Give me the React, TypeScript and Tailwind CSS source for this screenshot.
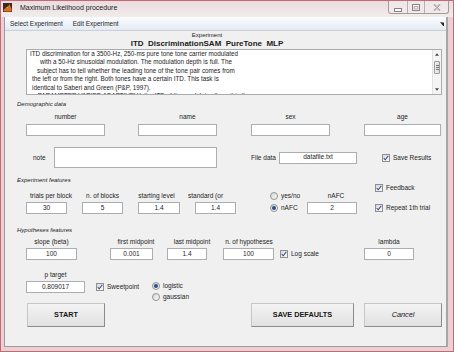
import React from "react";

type Kids = { children?: React.ReactNode; className?: string };

function Box({ children, className = "" }: Kids) {
  return (
    <div
      className={`h-[12px] flex items-center justify-center bg-white border border-[#abadb1] text-[6.5px] leading-none text-[#1c1c1c] ${className}`}
    >
      {children}
    </div>
  );
}

function Label({ children, className = "" }: Kids) {
  return (
    <div className={`h-[8px] text-[6.5px] leading-[8px] text-[#1c1c1c] whitespace-nowrap ${className}`}>
      {children}
    </div>
  );
}

function Section({ children, className = "" }: Kids) {
  return (
    <div className={`ml-[12px] h-[8px] text-[6px] leading-[8px] italic text-[#1c1c1c] ${className}`}>
      {children}
    </div>
  );
}

function CheckBox({ label, className = "" }: { label: string; className?: string }) {
  return (
    <div className={`flex items-center gap-[3px] ${className}`}>
      <div className="w-[8px] h-[8px] border border-[#8e8f8f] bg-linear-to-br from-[#d7d9de] to-[#fafafa] flex items-center justify-center">
        <svg viewBox="0 0 8 8" className="w-[6px] h-[6px]">
          <path d="M1 4.2 L3 6.4 L7 1.2" fill="none" stroke="#3b4f88" strokeWidth="1.4" />
        </svg>
      </div>
      <span className="text-[6.5px] leading-[8px] text-[#1c1c1c] whitespace-nowrap">{label}</span>
    </div>
  );
}

function Radio({ label, on = false, className = "" }: { label: string; on?: boolean; className?: string }) {
  return (
    <div className={`flex items-center gap-[3px] ${className}`}>
      <div className="w-[8px] h-[8px] rounded-full border border-[#939393] bg-linear-to-br from-[#d5d5d5] to-[#fbfbfb] flex items-center justify-center">
        {on && <div className="w-[4px] h-[4px] rounded-full bg-[#27508f]" />}
      </div>
      <span className="text-[6.5px] leading-[8px] text-[#1c1c1c] whitespace-nowrap">{label}</span>
    </div>
  );
}

function Btn({ children, className = "" }: Kids) {
  return (
    <button
      type="button"
      className={`h-[24px] flex items-center justify-center bg-linear-to-b from-[#f3f3f3] to-[#e1e1e1] border border-[#c6c6c6] border-r-[#8c8c8c] border-b-[#8c8c8c] text-[7.3px] text-[#151515] ${className}`}
    >
      {children}
    </button>
  );
}

function TitleBar() {
  return (
    <div className="h-[16px] flex items-start bg-linear-to-b from-[#eadcde] to-[#f2ecec]">
      <svg viewBox="0 0 9 9" className="ml-[2px] mt-[2px] w-[9px] h-[9px]">
        <rect width="9" height="9" fill="#3b2a24" />
        <path d="M0.5 7 L3 4.5 L4.5 5.5 L6.5 1 L8.5 6 L8.5 8.5 L0.5 8.5 Z" fill="#e0701f" />
        <path d="M3 4.5 L4.5 5.5 L6.5 1 L5 3.5 Z" fill="#f4b040" />
      </svg>
      <span className="ml-[8px] mt-[3px] text-[7px] leading-[8px] text-[#1a1a1a] whitespace-nowrap">
        Maximum Likelihood procedure
      </span>
      <div className="ml-auto mr-[4px] h-[13px] flex border border-t-0 border-[#a89a9c] rounded-b-[3px] bg-[#f3eced]/60">
        <div className="w-[19px] flex items-center justify-center border-r border-[#b9adaf]">
          <svg viewBox="0 0 8 6" className="w-[8px] h-[6px] mt-[3px]">
            <rect x="0.5" y="2.5" width="7" height="3" fill="#fff" stroke="#8a8183" />
          </svg>
        </div>
        <div className="w-[17px] flex items-center justify-center border-r border-[#b9adaf]">
          <svg viewBox="0 0 8 7" className="w-[8px] h-[7px]">
            <rect x="0.5" y="0.5" width="7" height="6" fill="#fff" stroke="#8a8183" />
            <rect x="2" y="2.5" width="4" height="2.5" fill="#eee" stroke="#8a8183" strokeWidth="0.6" />
          </svg>
        </div>
        <div className="w-[23px] flex items-center justify-center">
          <svg viewBox="0 0 8 7" className="w-[8px] h-[7px]">
            <path d="M1 0.5 L4 3 L7 0.5 M1 6.5 L4 4 L7 6.5" fill="none" stroke="#8a8183" strokeWidth="1.6" />
            <path d="M1 0.5 L4 3 L7 0.5 M1 6.5 L4 4 L7 6.5" fill="none" stroke="#fff" strokeWidth="0.6" />
          </svg>
        </div>
      </div>
    </div>
  );
}

function MenuBar() {
  return (
    <div className="h-[14px] flex items-center bg-linear-to-b from-[#fbfcfe] to-[#e4eaf3] border-b border-[#c9d0da] text-[6.5px] text-[#1e1e1e]">
      <span className="ml-[5px]">Select Experiment</span>
      <span className="ml-[10px]">Edit Experiment</span>
      <svg viewBox="0 0 4 4" className="ml-auto mr-[2px] w-[4px] h-[4px]">
        <path d="M0 0 L4 4 L4 0.8 Z M0 0 L3.2 4 L4 4 Z" fill="#222" />
      </svg>
    </div>
  );
}

function Description() {
  return (
    <div className="mt-[1px] ml-[21px] w-[416px] h-[46px] bg-white border border-[#a9abaf] flex">
      <div className="flex-1 overflow-hidden text-[6.3px] leading-[8.4px] text-[#222] whitespace-nowrap">
        <div className="pl-[3px]">ITD discrimination for a 3500-Hz, 250-ms pure tone tone carrier modulated</div>
        <div className="pl-[13px]">with a 50-Hz sinusoidal modulation. The modulation depth is full. The</div>
        <div className="pl-[10px]">subject has to tell whether the leading tone of the tone pair comes from</div>
        <div className="pl-[5px]">the left or from the right. Both tones have a certain ITD. This task is</div>
        <div className="pl-[5px]">identical to Saberi and Green (P&amp;P, 1997).</div>
        <div className="pl-[7px]">- PARAMETER VARIED ADAPTIVELY: the ITD of the modulator (here it is the</div>
      </div>
      <div className="w-[9px] flex flex-col bg-[#f4f4f4] border-l border-[#e2e2e2]">
        <div className="h-[9px] flex items-center justify-center">
          <svg viewBox="0 0 5 3" className="w-[4px] h-[3px]">
            <path d="M0 3 L2.5 0 L5 3 Z" fill="#444" />
          </svg>
        </div>
        <div className="mt-[2px] h-[13px] mx-[1px] rounded-[1px] border border-[#9c9c9c] bg-linear-to-r from-[#f0f0f0] to-[#dcdcdc] flex flex-col items-center justify-center gap-[1px]">
          <div className="w-[3px] h-px bg-[#777]" />
          <div className="w-[3px] h-px bg-[#777]" />
          <div className="w-[3px] h-px bg-[#777]" />
        </div>
        <div className="mt-auto h-[9px] flex items-center justify-center">
          <svg viewBox="0 0 5 3" className="w-[4px] h-[3px]">
            <path d="M0 0 L2.5 3 L5 0 Z" fill="#444" />
          </svg>
        </div>
      </div>
    </div>
  );
}

export default function App() {
  return (
    <div className="w-[454px] h-[352px] border border-[#c46a74] bg-[#ebcfd2] flex flex-col overflow-hidden font-['Liberation_Sans',Arial,sans-serif]">
      <TitleBar />
      <div className="ml-[3px] w-[444px] h-[330px] border-l border-l-[#9b9b9b] border-r-2 border-r-[#a6a6a6] border-b border-b-[#9b9b9b] flex flex-col">
        <MenuBar />
        <div className="flex-1 bg-[#f0f0f0] flex flex-col text-[#1c1c1c]">
          <div className="mt-[1px] w-[404px] h-[7px] text-center text-[6px] leading-[7px]">Experiment</div>
          <div className="w-[404px] h-[9px] text-center text-[8px] leading-[9px] font-bold [word-spacing:2.2px]">
            ITD DiscriminationSAM PureTone MLP
          </div>
          <Description />

          <Section className="mt-[5px]">Demographic data</Section>
          <div className="mt-[5px] flex">
            <Label className="ml-[21px] w-[79px] text-center">number</Label>
            <Label className="ml-[43px] w-[79px] text-center">name</Label>
            <Label className="ml-[24px] w-[79px] text-center">sex</Label>
            <Label className="ml-[34px] w-[77px] text-center">age</Label>
          </div>
          <div className="mt-[3px] flex">
            <Box className="ml-[21px] w-[79px]" />
            <Box className="ml-[33px] w-[79px]" />
            <Box className="ml-[34px] w-[79px]" />
            <Box className="ml-[34px] w-[77px]" />
          </div>

          <div className="mt-[11px] h-[21px] flex items-center">
            <Label className="ml-[28px] w-[21px]">note</Label>
            <div className="w-[163px] h-[21px] bg-white border border-[#abadb1]" />
            <Label className="ml-[34px] w-[28px]">File data</Label>
            <Box className="w-[78px] h-[11px]">datafile.txt</Box>
            <CheckBox className="ml-[25px]" label="Save Results" />
          </div>

          <Section className="mt-[8px]">Experiment features</Section>
          <div className="h-[16px] flex items-end">
            <Label className="ml-[21px] w-[50px] text-center">trials per block</Label>
            <Label className="ml-[6px] w-[41px] text-center">n. of blocks</Label>
            <Label className="ml-[13px] w-[41px] text-center">starting level</Label>
            <Label className="ml-[11px] w-[50px] overflow-hidden">standard (or</Label>
            <Radio className="ml-[32px] w-[40px]" label="yes/no" />
            <Label className="ml-[1px] w-[50px] text-center">nAFC</Label>
            <CheckBox className="ml-[14px] mb-[8px]" label="Feedback" />
          </div>
          <div className="mt-[2px] flex items-center">
            <Box className="ml-[21px] w-[41px]">30</Box>
            <Box className="ml-[15px] w-[41px]">5</Box>
            <Box className="ml-[15px] w-[42px]">1.4</Box>
            <Box className="ml-[15px] w-[41px]">1.4</Box>
            <Radio className="ml-[34px] w-[37px]" label="nAFC" on />
            <Box className="w-[50px]">2</Box>
            <CheckBox className="ml-[18px]" label="Repeat 1th trial" />
          </div>

          <Section className="mt-[12px]">Hypotheses features</Section>
          <div className="mt-[4px] flex">
            <Label className="ml-[21px] w-[51px] text-center">slope (beta)</Label>
            <Label className="ml-[34px] w-[50px] text-center">first midpoint</Label>
            <Label className="ml-[6px] w-[50px] text-center">last midpoint</Label>
            <Label className="ml-[2px] w-[60px] text-center">n. of hypotheses</Label>
            <Label className="ml-[85px] w-[50px] text-center">lambda</Label>
          </div>
          <div className="mt-[2px] flex items-center">
            <Box className="ml-[21px] w-[51px]">100</Box>
            <Box className="ml-[33px] w-[43px]">0.001</Box>
            <Box className="ml-[14px] w-[40px]">1.4</Box>
            <Box className="ml-[16px] w-[51px]">100</Box>
            <CheckBox className="ml-[6px] w-[84px]" label="Log scale" />
            <Box className="w-[50px]">0</Box>
          </div>

          <Label className="mt-[11px] ml-[21px] w-[59px] text-center">p target</Label>
          <div className="mt-[2px] h-[20px] flex items-start">
            <Box className="ml-[21px] w-[59px] h-[11px]">0.809017</Box>
            <CheckBox className="ml-[11px] mt-[2px] w-[56px]" label="Sweetpoint" />
            <div className="mt-[1px] flex flex-col gap-[3px]">
              <Radio label="logistic" on />
              <Radio label="gaussian" />
            </div>
          </div>

          <div className="mt-[2px] flex">
            <Btn className="ml-[22px] w-[78px] font-bold">START</Btn>
            <Btn className="ml-[146px] w-[103px] font-bold">SAVE DEFAULTS</Btn>
            <Btn className="ml-[10px] w-[78px] italic">Cancel</Btn>
          </div>
        </div>
      </div>
    </div>
  );
}
